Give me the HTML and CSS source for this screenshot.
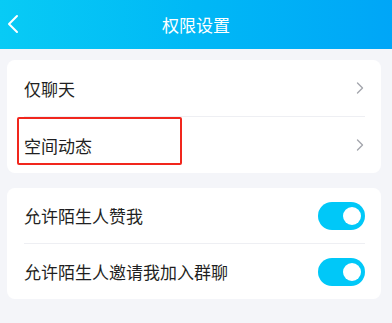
FILE: index.html
```html
<!DOCTYPE html>
<html lang="zh">
<head>
<meta charset="utf-8">
<link rel="stylesheet" href="styles.css">
</head>
<body>
<header class="topbar">
  <span class="back">
    <svg width="12" height="20" viewBox="0 0 12 20"><path d="M10 2 L2 10 L10 18" fill="none" stroke="#fff" stroke-width="2" stroke-linecap="round" stroke-linejoin="round"/></svg>
  </span>
  <h1 class="title">权限设置</h1>
</header>
<main class="content">
  <section class="card card-first">
    <div class="row">
      <span class="label">仅聊天</span>
      <svg class="chev" width="8" height="12" viewBox="0 0 8 12"><path d="M1.5 1 L6.5 6 L1.5 11" fill="none" stroke="#a4a6ad" stroke-width="1.4" stroke-linecap="round" stroke-linejoin="round"/></svg>
    </div>
    <div class="row">
      <span class="label">空间动态</span>
      <svg class="chev" width="8" height="12" viewBox="0 0 8 12"><path d="M1.5 1 L6.5 6 L1.5 11" fill="none" stroke="#a4a6ad" stroke-width="1.4" stroke-linecap="round" stroke-linejoin="round"/></svg>
    </div>
    <div class="highlight"></div>
  </section>
  <section class="card card-second">
    <div class="row">
      <span class="label">允许陌生人赞我</span>
      <span class="toggle"><span class="knob"></span></span>
    </div>
    <div class="row">
      <span class="label">允许陌生人邀请我加入群聊</span>
      <span class="toggle"><span class="knob"></span></span>
    </div>
  </section>
</main>
</body>
</html>
```

FILE: styles.css
```css
html, body {
  margin: 0;
  padding: 0;
}
body {
  width: 392px;
  height: 323px;
  background: #f4f5f9;
  font-family: "Noto Sans CJK SC", "Noto Sans", sans-serif;
  overflow: hidden;
}
.topbar {
  height: 49px;
  background: linear-gradient(90deg, #08cbf5 0%, #00b8f6 50%, #00a6f7 100%);
  display: flex;
  align-items: center;
  justify-content: center;
  position: relative;
}
.back {
  position: absolute;
  left: 7px;
  top: 14px;
  width: 12px;
  height: 20px;
  display: flex;
}
.title {
  margin: 0;
  color: #fff;
  font-size: 17px;
  font-weight: 400;
  line-height: 1;
}
.content {
  padding: 11px 11px 0 7px;
  display: flex;
  flex-direction: column;
  gap: 15px;
}
.card {
  background: #fff;
  border-radius: 8px;
  padding: 0 16px 0 17px;
  position: relative;
}
.row {
  height: 56px;
  display: flex;
  align-items: center;
  justify-content: space-between;
}
.card-second .row {
  height: 55px;
}
.row + .row {
  border-top: 1px solid #eeeff3;
}
.label {
  font-size: 17px;
  color: #1f1f22;
}
.chev {
  margin-right: 1px;
}
.toggle {
  width: 47px;
  height: 28px;
  border-radius: 14px;
  background: #00c8f8;
  display: flex;
  align-items: center;
  justify-content: flex-end;
  padding-right: 4px;
  box-sizing: border-box;
}
.knob {
  width: 18px;
  height: 18px;
  border-radius: 50%;
  background: #fff;
}
.highlight {
  position: absolute;
  left: 10px;
  top: 57px;
  width: 165px;
  height: 48px;
  border: 2px solid #f1261d;
  border-radius: 2px;
  box-sizing: border-box;
}
```
